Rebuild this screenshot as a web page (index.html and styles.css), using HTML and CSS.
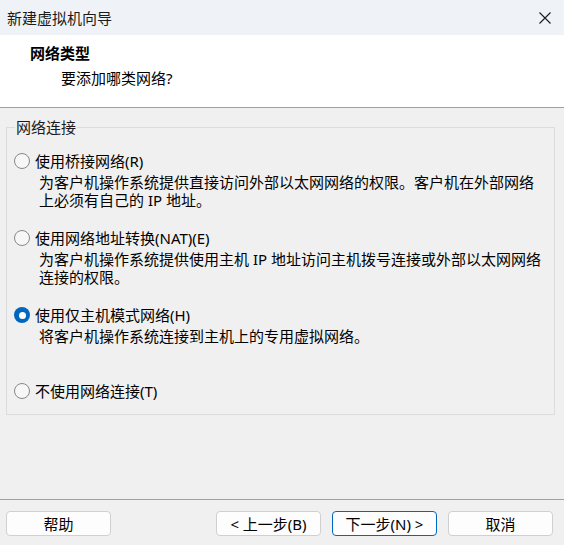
FILE: index.html
```html
<!DOCTYPE html>
<html lang="zh-CN">
<head>
<meta charset="utf-8">
<title>新建虚拟机向导</title>
<link rel="stylesheet" href="styles.css">
</head>
<body>
<div class="window">
  <div class="titlebar">
    <span class="title">新建虚拟机向导</span>
    <span class="close">
      <svg width="12" height="12" viewBox="0 0 12 12"><path d="M0.5 0.5 L11.5 11.5 M11.5 0.5 L0.5 11.5" stroke="#1a1a1a" stroke-width="1.1" fill="none"/></svg>
    </span>
  </div>
  <div class="header">
    <div class="h-title">网络类型</div>
    <div class="h-sub">要添加哪类网络?</div>
  </div>
  <div class="main">
    <fieldset class="group">
      <legend class="legend">网络连接</legend>
      <div class="option opt-a">
        <div class="opt-label"><span class="radio"></span><span>使用桥接网络(R)</span></div>
        <div class="opt-desc">为客户机操作系统提供直接访问外部以太网网络的权限。客户机在外部网络<br>上必须有自己的 IP 地址。</div>
      </div>
      <div class="option opt-a">
        <div class="opt-label"><span class="radio"></span><span>使用网络地址转换(NAT)(E)</span></div>
        <div class="opt-desc">为客户机操作系统提供使用主机 IP 地址访问主机拨号连接或外部以太网网络<br>连接的权限。</div>
      </div>
      <div class="option opt-b">
        <div class="opt-label"><span class="radio checked"></span><span>使用仅主机模式网络(H)</span></div>
        <div class="opt-desc">将客户机操作系统连接到主机上的专用虚拟网络。</div>
      </div>
      <div class="option">
        <div class="opt-label"><span class="radio"></span><span>不使用网络连接(T)</span></div>
      </div>
    </fieldset>
  </div>
  <div class="footer">
    <button class="btn">帮助</button>
    <div class="spacer"></div>
    <button class="btn">&lt; 上一步(B)</button>
    <button class="btn default">下一步(N) &gt;</button>
    <button class="btn">取消</button>
  </div>
</div>
</body>
</html>
```
FILE: styles.css
```css
html, body {
  margin: 0;
  padding: 0;
}
body {
  width: 564px;
  height: 545px;
  overflow: hidden;
  background: #f0f0f0;
  font-family: "Noto Sans", "Noto Sans CJK SC", sans-serif;
  font-size: 15px;
  color: #000;
}
.window {
  display: flex;
  flex-direction: column;
  height: 545px;
}
.titlebar {
  height: 35px;
  background: #eff3f8;
  display: flex;
  align-items: center;
  padding: 0 13px 0 7px;
  box-sizing: border-box;
}
.title {
  flex: 1;
  line-height: 20px;
  color: #1b1b1b;
}
.close {
  display: flex;
  width: 12px;
  height: 12px;
}
.header {
  background: #fff;
  height: 73px;
  box-sizing: border-box;
  border-bottom: 1px solid #a0a0a0;
  padding-top: 8px;
}
.h-title {
  font-weight: bold;
  line-height: 20px;
  padding-left: 30px;
}
.h-sub {
  line-height: 20px;
  margin-top: 5px;
  padding-left: 61px;
}
.main {
  flex: 1;
  padding: 9px 9px 0 6px;
}
.group {
  margin: 0;
  border: 1px solid #dcdcdc;
  padding: 14px 0 13px 8px;
  min-width: 0;
}
.legend {
  padding: 0 1px;
  line-height: 20px;
  color: #1a1a1a;
}
.option {
  display: flex;
  flex-direction: column;
}
.opt-a {
  height: 77px;
}
.opt-b {
  height: 76px;
}
.opt-label {
  display: flex;
  align-items: center;
  gap: 5px;
  line-height: 20px;
  height: 20px;
  margin-left: -1px;
}
.opt-desc {
  margin-top: 2px;
  padding-left: 24px;
  line-height: 18px;
  white-space: nowrap;
}
.radio {
  width: 16px;
  height: 16px;
  box-sizing: border-box;
  border: 1px solid #878787;
  border-radius: 50%;
  background: #f7f7f7;
  display: flex;
  align-items: center;
  justify-content: center;
  flex: none;
}
.radio.checked {
  border: none;
  background: #0067c0;
}
.radio.checked::after {
  content: "";
  width: 7px;
  height: 7px;
  border-radius: 50%;
  background: #fff;
}
.footer {
  border-top: 1px solid #a0a0a0;
  height: 46px;
  box-sizing: border-box;
  display: flex;
  align-items: flex-start;
  padding: 11px 11px 0 6px;
  gap: 11px;
}
.spacer {
  flex: 1;
}
.btn {
  width: 105px;
  height: 25px;
  box-sizing: border-box;
  border: 1px solid #d0d0d0;
  border-radius: 4px;
  background: #fdfdfd;
  font-family: "Noto Sans", "Noto Sans CJK SC", sans-serif;
  font-size: 15px;
  line-height: 20px;
  padding: 0;
  color: #000;
}
.btn.default {
  border-color: #0067c0;
}
```
